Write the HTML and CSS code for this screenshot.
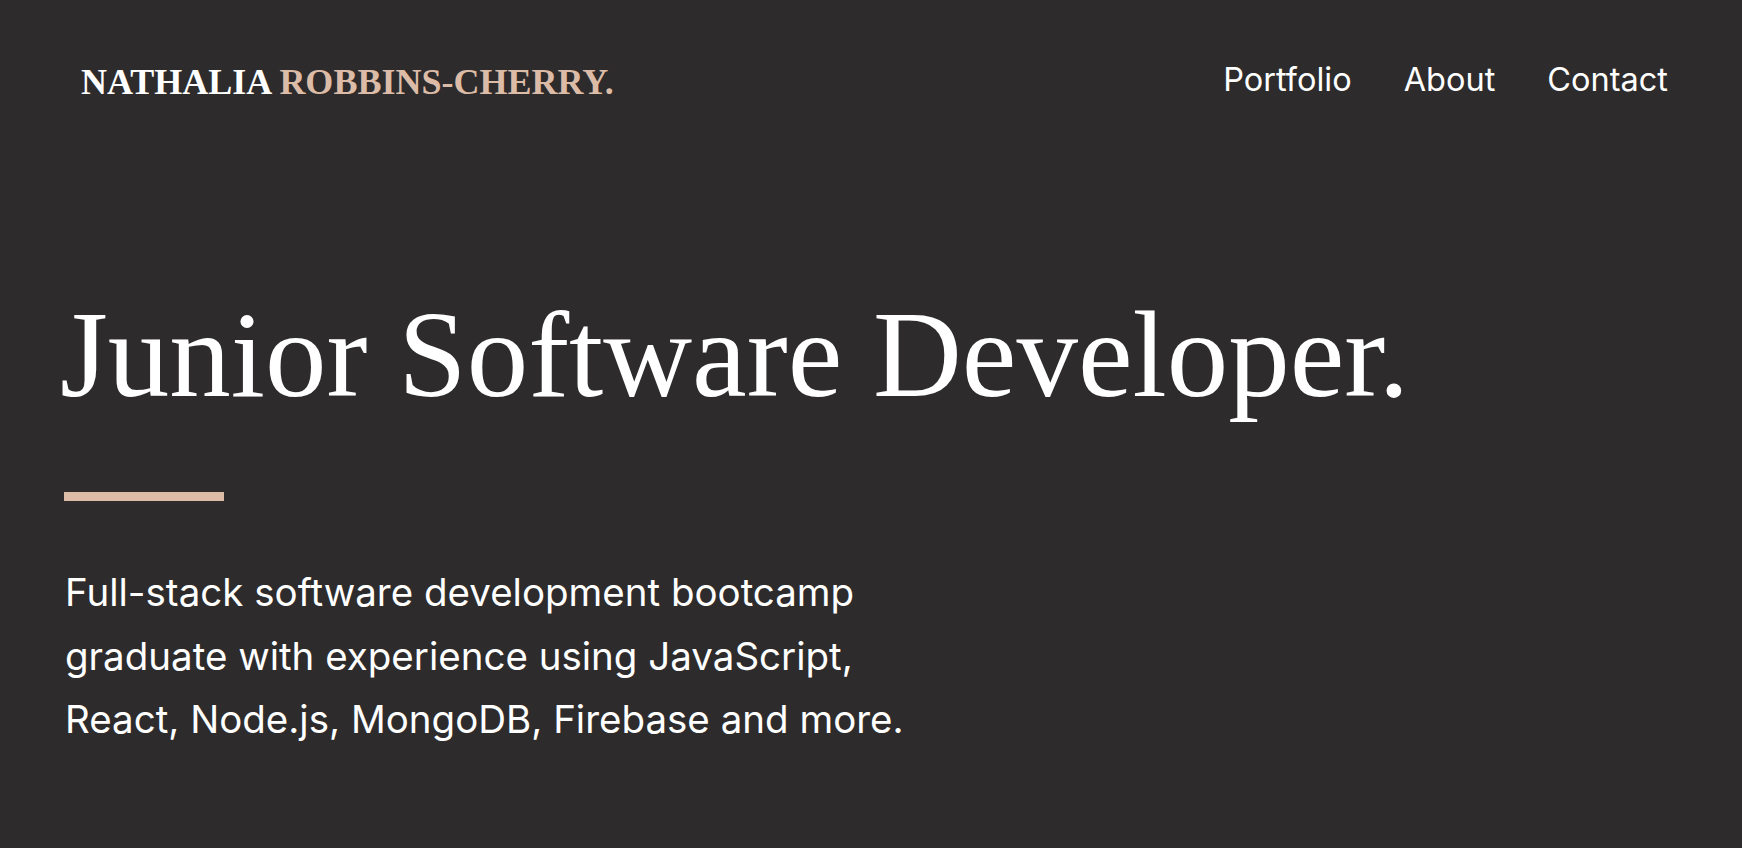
FILE: index.html
```html
<!DOCTYPE html>
<html lang="en">
<head>
<meta charset="utf-8">
<title>Nathalia Robbins-Cherry</title>
<link rel="stylesheet" href="styles.css">
</head>
<body>
  <header class="site-header">
    <a class="logo" href="#"><span class="logo-first">NATHALIA</span> <span class="logo-last">ROBBINS-CHERRY.</span></a>
    <nav class="main-nav">
      <a href="#">Portfolio</a>
      <a href="#">About</a>
      <a href="#">Contact</a>
    </nav>
  </header>
  <main class="hero">
    <h1 class="hero-title">Junior Software Developer.</h1>
    <div class="hero-rule"></div>
    <p class="hero-text">Full-stack software development bootcamp<br>graduate with experience using JavaScript,<br>React, Node.js, MongoDB, Firebase and more.</p>
  </main>
</body>
</html>
```

FILE: styles.css
```css
html, body {
  margin: 0;
  padding: 0;
}

body {
  background: #2d2b2c;
  color: #ffffff;
  font-family: "Inter", "Liberation Sans", sans-serif;
  min-height: 848px;
}

a {
  color: inherit;
  text-decoration: none;
}

.site-header {
  display: flex;
  justify-content: space-between;
  align-items: flex-start;
  padding: 64px 74px 0 81px;
}

.logo {
  margin-top: 0;
  font-family: "Liberation Serif", "Times New Roman", serif;
  font-weight: 700;
  font-size: 36px;
  line-height: 1;
  white-space: nowrap;
}

.logo-first {
  color: #ffffff;
}

.logo-last {
  color: #dcbca7;
}

.main-nav {
  display: flex;
  gap: 52px;
  font-size: 32.5px;
  line-height: 1;
}

.hero {
  padding: 182px 64px 0 64px;
}

.hero-title {
  margin: 0 0 64px -4px;
  font-family: "Liberation Serif", "Times New Roman", serif;
  font-weight: 400;
  font-size: 123px;
  line-height: 146px;
  white-space: nowrap;
}

.hero-rule {
  width: 160px;
  height: 9px;
  background: #dcbca7;
}

.hero-text {
  margin: 60px 0 0 1px;
  font-size: 38.5px;
  line-height: 63.5px;
}
```
